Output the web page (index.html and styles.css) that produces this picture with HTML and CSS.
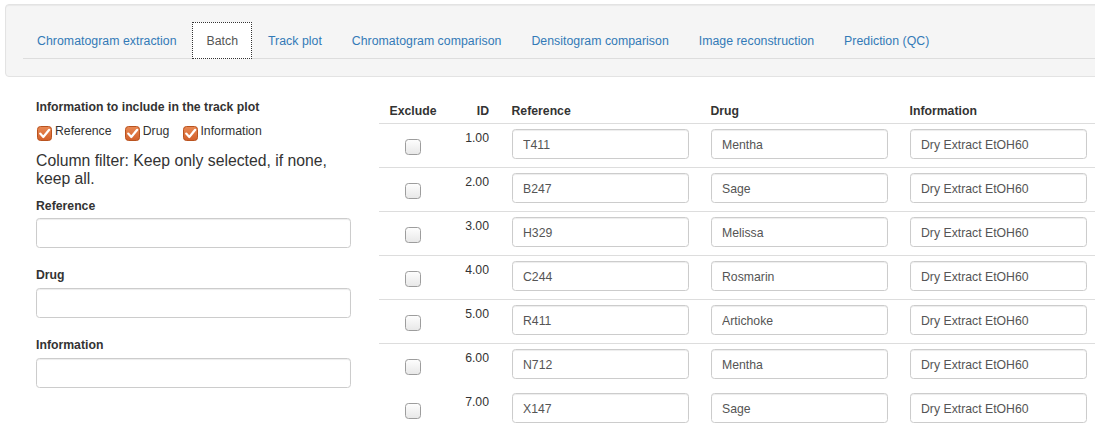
FILE: index.html
```html
<!DOCTYPE html>
<html lang="en">
<head>
<meta charset="utf-8">
<title>Batch</title>
<link rel="stylesheet" href="styles.css">
</head>
<body>
<div class="page">
  <div class="well">
    <ul class="nav-tabs">
      <li><a>Chromatogram extraction</a></li>
      <li class="active"><a>Batch</a></li>
      <li><a>Track plot</a></li>
      <li><a>Chromatogram comparison</a></li>
      <li><a>Densitogram comparison</a></li>
      <li><a>Image reconstruction</a></li>
      <li><a>Prediction (QC)</a></li>
    </ul>
  </div>

  <div class="main">
    <aside class="sidebar">
      <label class="ctl-label">Information to include in the track plot</label>
      <div class="checks">
        <label class="check"><svg class="tick" viewBox="0 0 15 15" width="15" height="15"><defs><linearGradient id="og" x1="0" y1="0" x2="0" y2="1"><stop offset="0" stop-color="#e98a55"/><stop offset="1" stop-color="#d25f2a"/></linearGradient></defs><rect x="0.5" y="0.5" width="14" height="14" rx="3" fill="url(#og)" stroke="#b9531f"/><polyline points="3.2,7.6 6.3,11 12.2,3.8" fill="none" stroke="#fff" stroke-width="2.2" stroke-linecap="round" stroke-linejoin="round"/></svg>Reference</label>
        <label class="check"><svg class="tick" viewBox="0 0 15 15" width="15" height="15"><rect x="0.5" y="0.5" width="14" height="14" rx="3" fill="url(#og)" stroke="#b9531f"/><polyline points="3.2,7.6 6.3,11 12.2,3.8" fill="none" stroke="#fff" stroke-width="2.2" stroke-linecap="round" stroke-linejoin="round"/></svg>Drug</label>
        <label class="check"><svg class="tick" viewBox="0 0 15 15" width="15" height="15"><rect x="0.5" y="0.5" width="14" height="14" rx="3" fill="url(#og)" stroke="#b9531f"/><polyline points="3.2,7.6 6.3,11 12.2,3.8" fill="none" stroke="#fff" stroke-width="2.2" stroke-linecap="round" stroke-linejoin="round"/></svg>Information</label>
      </div>
      <h4 class="filter-title">Column filter: Keep only selected, if none, keep all.</h4>
      <div class="form-group first">
        <label class="ctl-label">Reference</label>
        <input class="form-control" type="text">
      </div>
      <div class="form-group">
        <label class="ctl-label">Drug</label>
        <input class="form-control" type="text">
      </div>
      <div class="form-group">
        <label class="ctl-label">Information</label>
        <input class="form-control" type="text">
      </div>
    </aside>

    <section class="table-wrap">
      <table class="batch">
        <colgroup>
          <col class="c-ex"><col class="c-id"><col class="c-in"><col class="c-in"><col class="c-in">
        </colgroup>
        <thead>
          <tr><th class="center">Exclude</th><th class="right">ID</th><th>Reference</th><th>Drug</th><th>Information</th></tr>
        </thead>
        <tbody>
          <tr class="lined"><td class="center"><span class="box"></span></td><td class="right num">1.00</td><td><input class="form-control" value="T411"></td><td><input class="form-control" value="Mentha"></td><td><input class="form-control" value="Dry Extract EtOH60"></td></tr>
          <tr class="lined"><td class="center"><span class="box"></span></td><td class="right num">2.00</td><td><input class="form-control" value="B247"></td><td><input class="form-control" value="Sage"></td><td><input class="form-control" value="Dry Extract EtOH60"></td></tr>
          <tr class="lined"><td class="center"><span class="box"></span></td><td class="right num">3.00</td><td><input class="form-control" value="H329"></td><td><input class="form-control" value="Melissa"></td><td><input class="form-control" value="Dry Extract EtOH60"></td></tr>
          <tr class="lined"><td class="center"><span class="box"></span></td><td class="right num">4.00</td><td><input class="form-control" value="C244"></td><td><input class="form-control" value="Rosmarin"></td><td><input class="form-control" value="Dry Extract EtOH60"></td></tr>
          <tr class="lined"><td class="center"><span class="box"></span></td><td class="right num">5.00</td><td><input class="form-control" value="R411"></td><td><input class="form-control" value="Artichoke"></td><td><input class="form-control" value="Dry Extract EtOH60"></td></tr>
          <tr><td class="center"><span class="box"></span></td><td class="right num">6.00</td><td><input class="form-control" value="N712"></td><td><input class="form-control" value="Mentha"></td><td><input class="form-control" value="Dry Extract EtOH60"></td></tr>
          <tr><td class="center"><span class="box"></span></td><td class="right num">7.00</td><td><input class="form-control" value="X147"></td><td><input class="form-control" value="Sage"></td><td><input class="form-control" value="Dry Extract EtOH60"></td></tr>
        </tbody>
      </table>
    </section>
  </div>
</div>
</body>
</html>
```

FILE: styles.css
```css
html, body {
  margin: 0;
  padding: 0;
  background: #fff;
  overflow: hidden;
}

body {
  font-family: "Liberation Sans", Arial, Helvetica, sans-serif;
  font-size: 12.25px;
  line-height: 17.5px;
  color: #333;
  width: 1095px;
  height: 428px;
}

.page {
  padding-top: 4px;
  width: 1095px;
}

/* ---------- top well with tabs ---------- */
.well {
  margin-left: 5px;
  width: 1120px;
  box-sizing: border-box;
  background: #f5f5f5;
  border: 1px solid #e3e3e3;
  border-radius: 4px;
  box-shadow: inset 0 1px 1px rgba(0, 0, 0, 0.05);
  padding: 17px 0 17px 17px;
}

.nav-tabs {
  list-style: none;
  margin: 0;
  padding: 0;
  display: flex;
  border-bottom: 1px solid #ddd;
}

.nav-tabs li {
  margin-right: 1.75px;
  margin-bottom: -1px;
}

.nav-tabs a {
  display: block;
  padding: 10px 13.1px 7.5px 13.1px;
  border: 1px solid transparent;
  border-radius: 3.5px 3.5px 0 0;
  color: #337ab7;
  font-size: 12.3px;
  letter-spacing: 0.03px;
  line-height: 17.5px;
  white-space: nowrap;
}

.nav-tabs li.active a {
  color: #555;
  background: #fff;
  border: 1px dotted #333;
  border-radius: 0;
}

/* ---------- main area ---------- */
.main {
  display: flex;
  align-items: flex-start;
  margin-top: 18px;
  padding-left: 36px;
}

.sidebar {
  width: 315px;
  flex: none;
  padding-top: 3.6px;
}

.ctl-label {
  display: block;
  font-weight: bold;
  line-height: 17.5px;
}

.checks {
  display: flex;
  gap: 13.5px;
  margin-top: 6px;
  padding-left: 1.3px;
}

.check {
  display: flex;
  align-items: flex-start;
  line-height: 17.5px;
  padding-top: 1px;
}

.tick {
  margin-top: 3px;
  margin-right: 2.7px;
  flex: none;
}

.filter-title {
  margin: 11.3px 0 0 0;
  font-size: 15.77px;
  line-height: 18px;
  font-weight: normal;
  color: #333;
}

.form-group {
  margin-top: 19px;
}

.form-group.first {
  margin-top: 9.2px;
}

.form-group .ctl-label {
  margin-bottom: 3.3px;
}

.form-control {
  display: block;
  box-sizing: border-box;
  width: 100%;
  height: 30px;
  margin: 0;
  padding: 6.25px 10.5px 4.25px 10.5px;
  font-family: inherit;
  font-size: 12.25px;
  line-height: 17.5px;
  color: #555;
  background: #fff;
  border: 1px solid #ccc;
  border-radius: 3.5px;
  box-shadow: inset 0 1px 1px rgba(0, 0, 0, 0.075);
  outline: none;
}

/* ---------- table ---------- */
.table-wrap {
  margin-left: 27.5px;
  flex: none;
}

.batch {
  border-collapse: collapse;
  table-layout: fixed;
  width: 719px;
}

.c-ex { width: 69px; }
.c-id { width: 53px; }
.c-in { width: 199px; }

.batch th {
  font-weight: bold;
  text-align: left;
  padding: 8px 11px 2.5px 11px;
  line-height: 17.5px;
  border-bottom: 1px solid #ddd;
}

.batch td {
  vertical-align: top;
  padding: 5px 11px 8px 11px;
  line-height: 17.5px;
  border-bottom: 1px solid transparent;
}

.batch td.num {
  padding-top: 6px;
}

.batch tr.lined td {
  border-bottom-color: #ddd;
}

.batch .center { text-align: center; }
.batch .right { text-align: right; padding-right: 11.5px; }

.box {
  display: inline-block;
  box-sizing: border-box;
  width: 16px;
  height: 16px;
  margin-top: 10px;
  border: 1px solid #9d9d9d;
  border-radius: 3.5px;
  background: linear-gradient(#fdfdfd, #e8e8e8);
  vertical-align: top;
}
```
